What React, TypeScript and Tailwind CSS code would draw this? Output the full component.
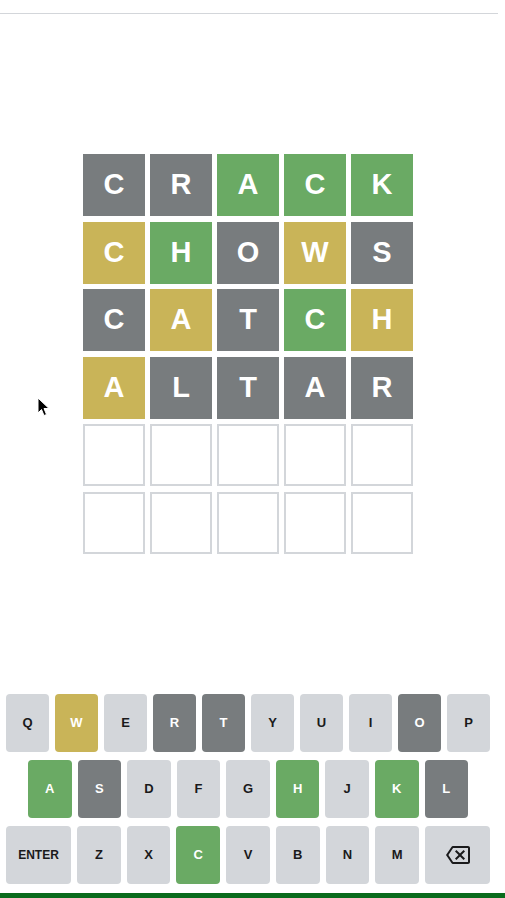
import React from 'react';

type S = 'g' | 'y' | 'x' | 'e';

const rows: [string, S][][] = [
  [['C', 'x'], ['R', 'x'], ['A', 'g'], ['C', 'g'], ['K', 'g']],
  [['C', 'y'], ['H', 'g'], ['O', 'x'], ['W', 'y'], ['S', 'x']],
  [['C', 'x'], ['A', 'y'], ['T', 'x'], ['C', 'g'], ['H', 'y']],
  [['A', 'y'], ['L', 'x'], ['T', 'x'], ['A', 'x'], ['R', 'x']],
  [['', 'e'], ['', 'e'], ['', 'e'], ['', 'e'], ['', 'e']],
  [['', 'e'], ['', 'e'], ['', 'e'], ['', 'e'], ['', 'e']],
];

const tileClass: Record<S, string> = {
  g: 'bg-[#6aaa64] text-white',
  y: 'bg-[#c9b458] text-white',
  x: 'bg-[#787c7e] text-white',
  e: 'bg-white border-2 border-[#d3d6da]',
};

const keyState: Record<string, S> = {
  W: 'y', R: 'x', T: 'x', O: 'x', A: 'g', S: 'x', H: 'g', K: 'g', L: 'x', C: 'g',
};

const keyClass = (k: string) => {
  const s = keyState[k];
  if (s === 'g') return 'bg-[#6aaa64] text-white';
  if (s === 'y') return 'bg-[#c9b458] text-white';
  if (s === 'x') return 'bg-[#787c7e] text-white';
  return 'bg-[#d3d6da] text-[#1a1a1b]';
};

const Key = ({ k, wide }: { k: string; wide?: boolean }) => (
  <div
    className={`h-[58px] rounded-[4px] flex items-center justify-center font-bold text-[13px] ${
      wide ? 'w-[65px] shrink-0' : 'flex-1'
    } ${keyClass(k)}`}
  >
    {k}
  </div>
);

const App = () => {
  return (
    <div className="relative h-[898px] w-[505px] bg-white flex flex-col overflow-hidden font-['Liberation_Sans',Arial,sans-serif]">
      <div className="mt-[13px] h-px w-[498px] bg-[#d3d6da]" />

      <div className="mt-[140px] ml-[83px] grid grid-cols-5 gap-x-[5px] gap-y-[5.6px] w-[330px]">
        {rows.map((row, i) =>
          row.map(([l, s], j) => (
            <div
              key={`${i}-${j}`}
              className={`h-[62px] w-[62px] flex items-center justify-center font-bold text-[29px] ${tileClass[s]}`}
            >
              {l}
            </div>
          ))
        )}
      </div>

      <div className="mt-[140px] ml-[6px] w-[484px] flex flex-col gap-[8px]">
        <div className="flex gap-[6px]">
          {'QWERTYUIOP'.split('').map((k) => (
            <Key key={k} k={k} />
          ))}
        </div>
        <div className="flex gap-[6px] w-[440px] ml-[22px]">
          {'ASDFGHJKL'.split('').map((k) => (
            <Key key={k} k={k} />
          ))}
        </div>
        <div className="flex gap-[6px]">
          <div className="w-[65px] shrink-0 h-[58px] rounded-[4px] flex items-center justify-center font-bold text-[12px] bg-[#d3d6da] text-[#1a1a1b]">
            ENTER
          </div>
          {'ZXCVBNM'.split('').map((k) => (
            <Key key={k} k={k} />
          ))}
          <div className="w-[65px] shrink-0 h-[58px] rounded-[4px] flex items-center justify-center bg-[#d3d6da] text-[#1a1a1b]">
            <svg width="24" height="24" viewBox="0 0 24 24" fill="currentColor">
              <path d="M22 3H7c-.69 0-1.23.35-1.59.88L0 12l5.41 8.11c.36.53.9.89 1.59.89h15c1.1 0 2-.9 2-2V5c0-1.1-.9-2-2-2zm0 16H7.07L2.4 12l4.66-7H22v14zm-11.59-2L14 13.41 17.59 17 19 15.59 15.41 12 19 8.41 17.59 7 14 10.59 10.41 7 9 8.41 12.59 12 9 15.59z" />
            </svg>
          </div>
        </div>
      </div>

      <div className="mt-auto h-[5px] w-full bg-[#0a6b1c]" />

      <svg className="absolute left-[37px] top-[397px]" width="14" height="21" viewBox="0 0 14 21">
        <path d="M1 1 L1 16 L4.5 12.5 L7 18.5 L9.5 17.5 L7 11.5 L12 11.5 Z" fill="#000" stroke="#fff" strokeWidth="1" />
      </svg>
    </div>
  );
};

export default App;
